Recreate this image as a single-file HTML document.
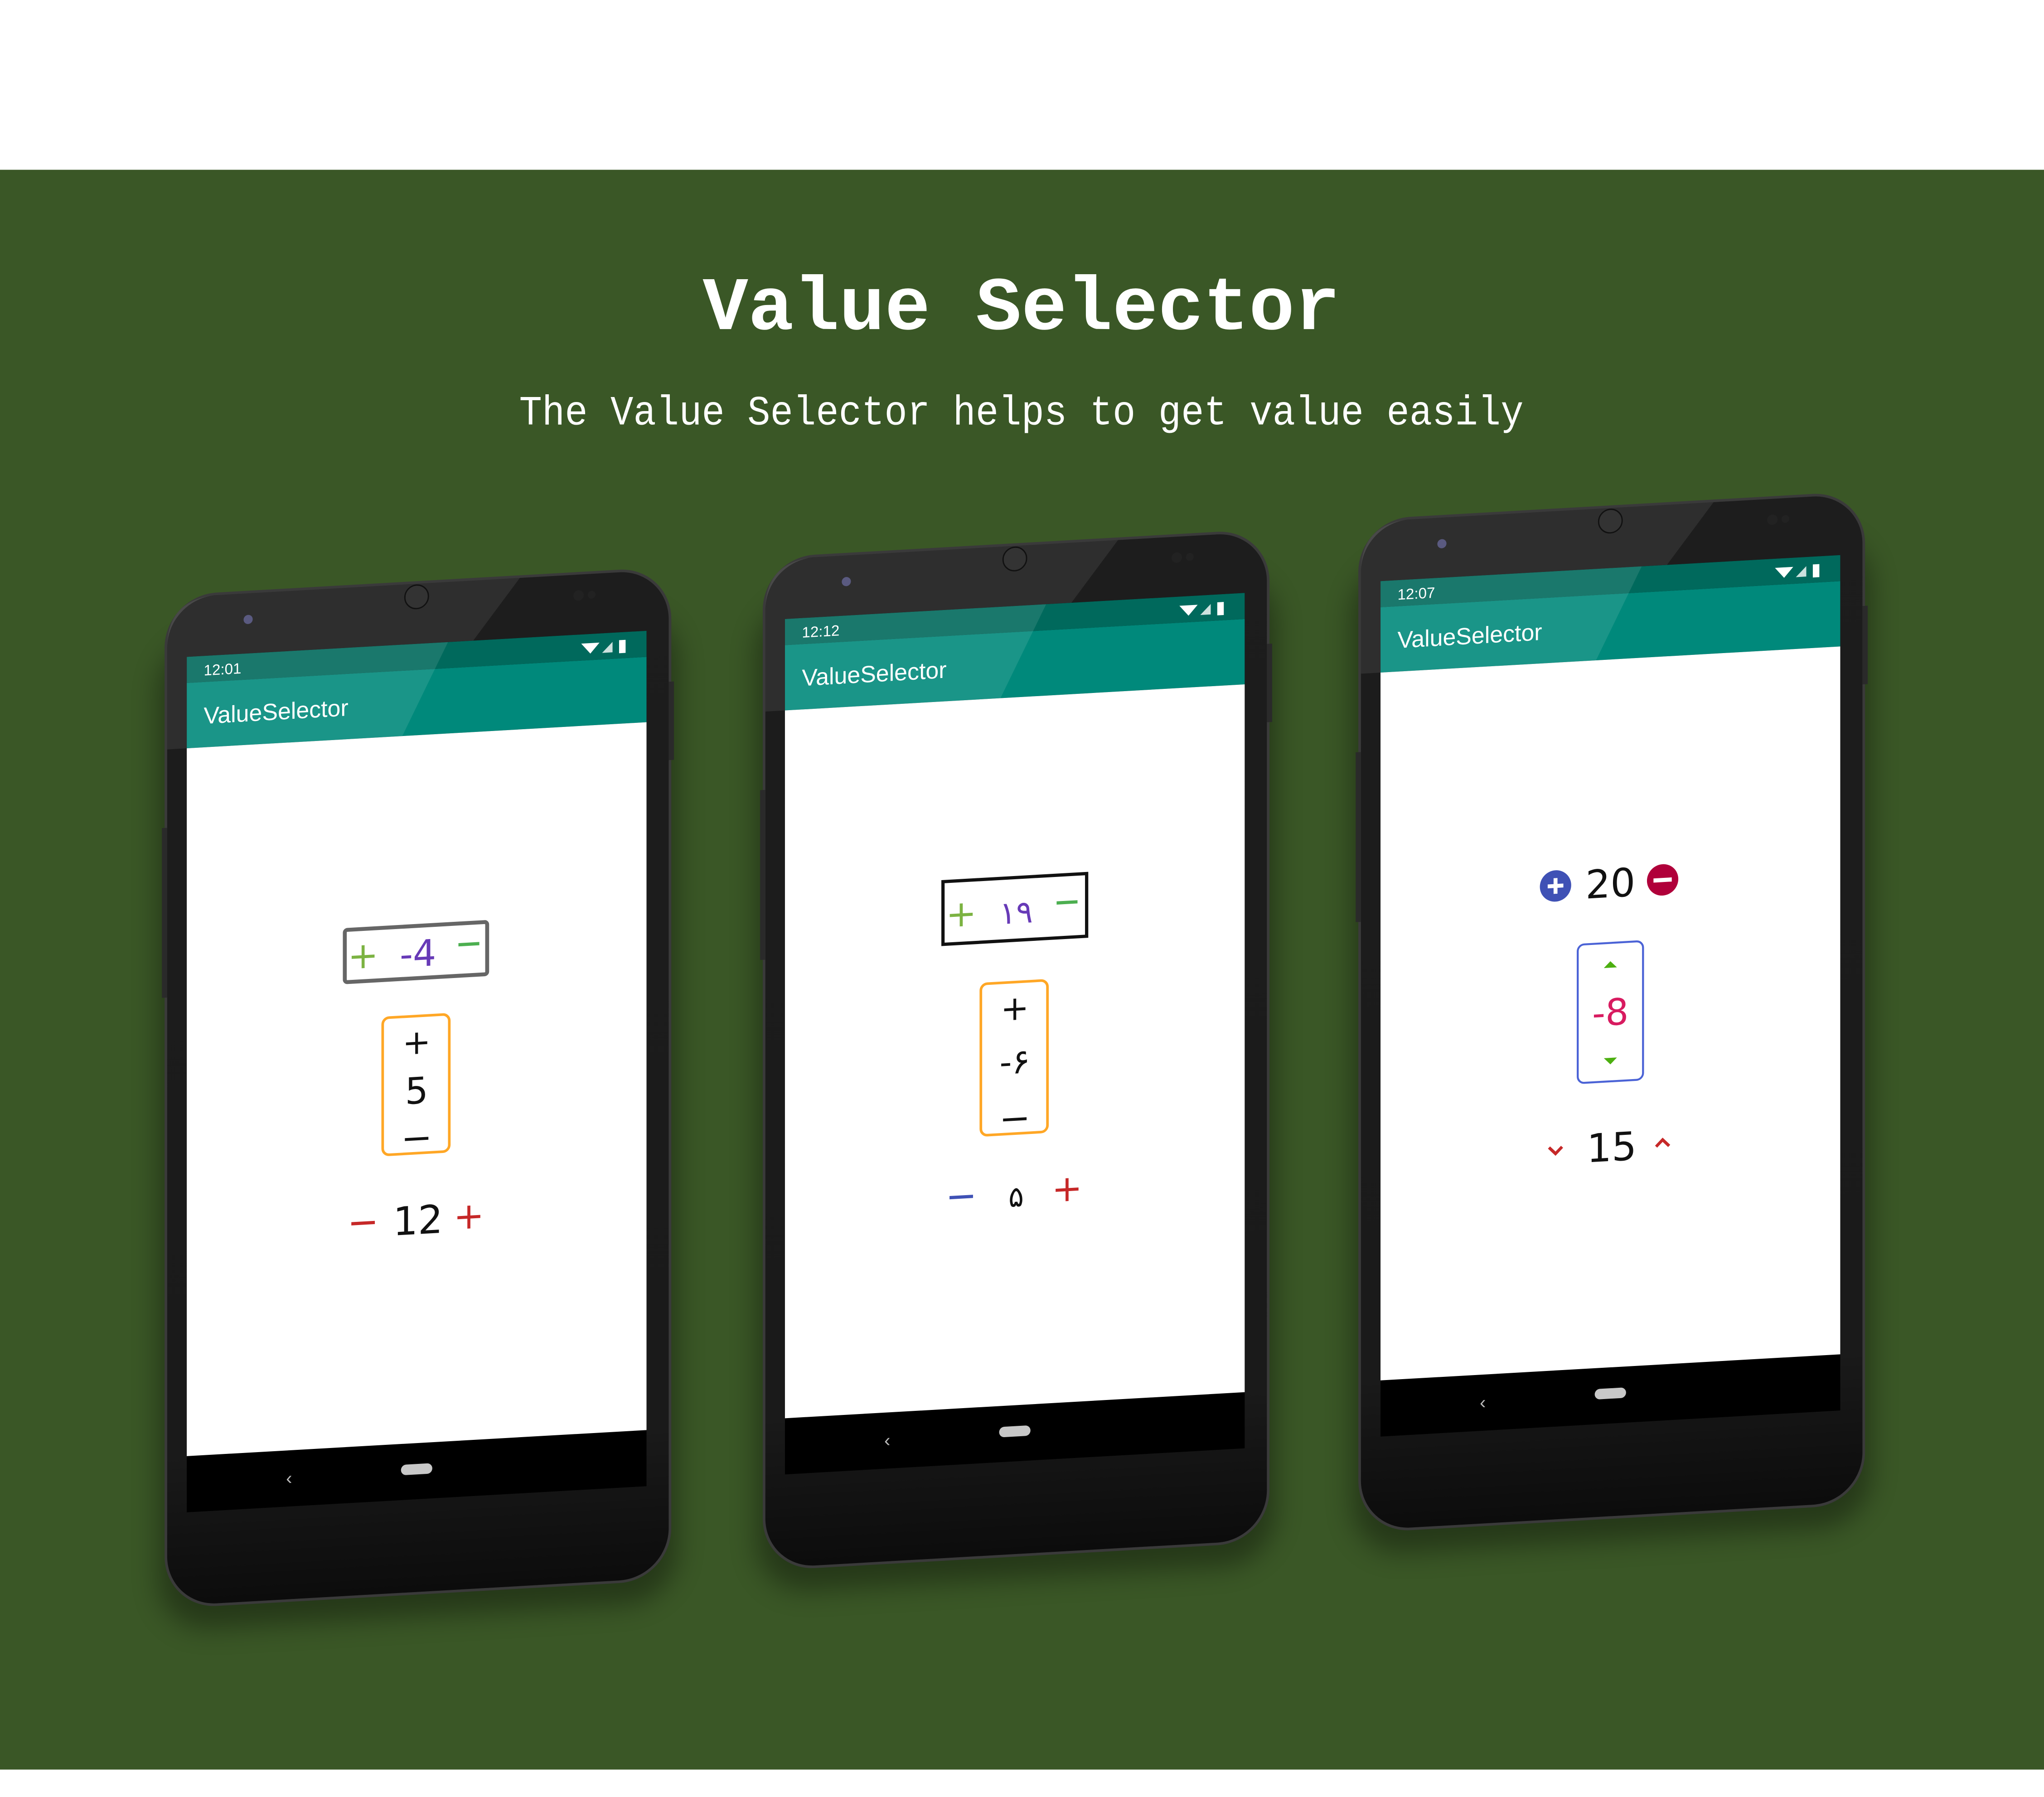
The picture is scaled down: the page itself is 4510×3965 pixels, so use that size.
<!DOCTYPE html>
<html><head><meta charset="utf-8"><style>
html,body{margin:0;padding:0;background:#fff;}
svg{display:block;}
</style></head><body>
<svg width="4510" height="3965" viewBox="0 0 1565 1376" preserveAspectRatio="none" xmlns="http://www.w3.org/2000/svg">
<defs>
<linearGradient id="bodyg" x1="0" y1="0" x2="0" y2="1">
<stop offset="0" stop-color="#1d1d1d"/><stop offset="0.85" stop-color="#1a1a1a"/><stop offset="1" stop-color="#0c0c0c"/>
</linearGradient>
<filter id="sh" x="-20%" y="-20%" width="140%" height="140%"><feGaussianBlur stdDeviation="10"/></filter>
<g id="phone">
<rect x="-22" y="-15" width="398" height="760" rx="40" fill="#000" opacity="0.35" filter="url(#sh)"/>
<rect x="-17" y="-48" width="388" height="776" rx="40" fill="#3a3a3a"/>
<rect x="-15" y="-46" width="384" height="772" rx="38" fill="url(#bodyg)"/>
<path d="M-15 -8 Q-15 -46 25 -46 L255 -46 L165 70 L-15 70 Z" fill="#ffffff" opacity="0.08"/>
<rect x="369" y="40" width="4" height="60" fill="#2a2a2a"/>
<rect x="-19" y="130" width="4" height="130" fill="#2a2a2a"/>
<circle cx="47" cy="-26" r="3.5" fill="#5a5a80"/>
<circle cx="176" cy="-36" r="9" fill="#333" stroke="#111" stroke-width="1"/>
<circle cx="300" cy="-30" r="4" fill="#222"/><circle cx="310" cy="-30" r="3" fill="#222"/>
<rect x="0" y="0" width="352" height="655" fill="#000"/>
<rect x="0" y="0" width="352" height="20" fill="#00695c"/>
<rect x="0" y="20" width="352" height="50" fill="#00897b"/>
<rect x="0" y="70" width="352" height="542" fill="#fff"/>
<path d="M0 0 L200 0 L165 70 L0 70 Z" fill="#ffffff" opacity="0.1"/>
<g fill="#fff"><path d="M302 7 L316 7 L309 15 Z"/><path d="M318 15 L326 7 L326 15 Z" opacity="0.8"/><rect x="331" y="6" width="5" height="10"/></g>
<text x="13" y="52" font-family="Liberation Sans, sans-serif" font-size="18" fill="#fff">ValueSelector</text>
<text x="76" y="638" font-family="Liberation Sans, sans-serif" font-size="14" fill="#bbb">‹</text>
<rect x="164" y="628" width="24" height="8" rx="4" fill="#c8c8c8"/>
</g>
</defs>
<rect x="0" y="130" width="1565" height="1225" fill="#3a5726"/>
<text x="782" y="252" text-anchor="middle" font-family="Liberation Mono, monospace" font-weight="bold" font-size="58" fill="#fff" textLength="488" lengthAdjust="spacingAndGlyphs">Value Selector</text>
<text x="782" y="325" text-anchor="middle" font-family="Liberation Mono, monospace" font-size="32" fill="#fff" textLength="769" lengthAdjust="spacingAndGlyphs">The Value Selector helps to get value easily</text>

<g font-family="DejaVu Sans, Liberation Sans, sans-serif">
<!-- phone 1 -->
<g transform="translate(143,503) skewY(-3.25)">
<use href="#phone"/>
<text x="13" y="15" font-family="Liberation Sans, sans-serif" font-size="11.5" fill="#fff">12:01</text>
<rect x="121" y="216" width="109" height="40" fill="none" stroke="#666" stroke-width="3" rx="2"/>
<text x="135" y="246" text-anchor="middle" font-size="28" fill="#7cb342">+</text>
<text x="177" y="247" text-anchor="middle" font-size="28" fill="#673ab7">-4</text>
<rect x="208" y="231" width="16" height="2.5" fill="#4caf50"/>
<rect x="150" y="285" width="51" height="105" rx="5" fill="none" stroke="#ffa726" stroke-width="2"/>
<text x="176" y="314" text-anchor="middle" font-size="26" fill="#111">+</text>
<text x="176" y="352" text-anchor="middle" font-size="28" fill="#111">5</text>
<rect x="167" y="378" width="18" height="2.2" fill="#111"/>
<rect x="126" y="440" width="18" height="2.5" fill="#c62828"/>
<text x="177" y="452" text-anchor="middle" font-size="30" fill="#111">12</text>
<text x="216" y="450" text-anchor="middle" font-size="28" fill="#c62828">+</text>
</g>
<!-- phone 2 -->
<g transform="translate(601,474) skewY(-3.25)">
<use href="#phone"/>
<text x="13" y="15" font-family="Liberation Sans, sans-serif" font-size="11.5" fill="#fff">12:12</text>
<rect x="121" y="208" width="110" height="48" fill="none" stroke="#111" stroke-width="2.5"/>
<text x="135" y="243" text-anchor="middle" font-size="28" fill="#7cb342">+</text>
<text x="177" y="243" text-anchor="middle" font-size="24" fill="#673ab7">١٩</text>
<rect x="208" y="228" width="16" height="2.5" fill="#4caf50"/>
<rect x="150" y="288" width="51" height="116" rx="5" fill="none" stroke="#ffa726" stroke-width="2"/>
<text x="176" y="317" text-anchor="middle" font-size="26" fill="#111">+</text>
<text x="176" y="358" text-anchor="middle" font-size="26" fill="#111">-۶</text>
<rect x="167" y="392" width="18" height="2.2" fill="#111"/>
<rect x="126" y="449" width="18" height="2.5" fill="#3f51b5"/>
<text x="177" y="460" text-anchor="middle" font-size="22" fill="#111">۵</text>
<text x="216" y="458" text-anchor="middle" font-size="28" fill="#c62828">+</text>
</g>
<!-- phone 3 -->
<g transform="translate(1057,445) skewY(-3.25)">
<use href="#phone"/>
<text x="13" y="15" font-family="Liberation Sans, sans-serif" font-size="11.5" fill="#fff">12:07</text>
<circle cx="134" cy="241" r="12" fill="#3f51b5"/>
<rect x="128" y="239.5" width="12" height="3" fill="#fff"/><rect x="132.5" y="235" width="3" height="12" fill="#fff"/>
<text x="176" y="252" text-anchor="middle" font-size="30" fill="#111">20</text>
<circle cx="216" cy="241" r="12" fill="#b0003a"/>
<rect x="209" y="239.5" width="14" height="3.2" fill="#fff"/>
<rect x="151" y="287" width="50" height="106" rx="5" fill="none" stroke="#4b63d6" stroke-width="1.5"/>
<path d="M171 306 L176 301 L181 306 Z" fill="#4caf10"/>
<text x="176" y="350" text-anchor="middle" font-size="28" fill="#d81b60">-8</text>
<path d="M171 375 L181 375 L176 380 Z" fill="#4caf10"/>
<path d="M129 441 L134 446 L139 441" fill="none" stroke="#c62828" stroke-width="2.3"/>
<text x="177" y="454" text-anchor="middle" font-size="30" fill="#111">15</text>
<path d="M211 445 L216 440 L221 445" fill="none" stroke="#c62828" stroke-width="2.3"/>
</g>
</g>
</svg>
</body></html>
